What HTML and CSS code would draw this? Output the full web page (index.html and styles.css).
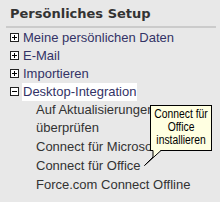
FILE: index.html
```html
<!DOCTYPE html>
<html>
<head>
<meta charset="utf-8">
<link rel="stylesheet" href="styles.css">
</head>
<body>
<div class="panel">
  <div class="header">Persönliches Setup</div>
  <ul class="tree">
    <li class="node"><svg class="tog" width="9" height="9" viewBox="0 0 9 9"><rect x="0.5" y="0.5" width="8" height="8" fill="#fff" stroke="#222"/><path d="M2 4.5H7M4.5 2V7" stroke="#000"/></svg><span>Meine persönlichen Daten</span></li>
    <li class="node"><svg class="tog" width="9" height="9" viewBox="0 0 9 9"><rect x="0.5" y="0.5" width="8" height="8" fill="#fff" stroke="#222"/><path d="M2 4.5H7M4.5 2V7" stroke="#000"/></svg><span>E-Mail</span></li>
    <li class="node"><svg class="tog" width="9" height="9" viewBox="0 0 9 9"><rect x="0.5" y="0.5" width="8" height="8" fill="#fff" stroke="#222"/><path d="M2 4.5H7M4.5 2V7" stroke="#000"/></svg><span>Importieren</span></li>
    <li class="node"><svg class="tog" width="9" height="9" viewBox="0 0 9 9"><rect x="0.5" y="0.5" width="8" height="8" fill="#fff" stroke="#222"/><path d="M2 4.5H7" stroke="#000"/></svg><span class="sel">Desktop-Integration</span></li>
  </ul>
  <ul class="sub">
    <li>Auf Aktualisierungen überprüfen</li>
    <li class="nw">Connect für Microsoft Outlook</li>
    <li>Connect für Office</li>
    <li>Force.com Connect Offline</li>
  </ul>
</div>
<div class="tip"><div class="tip-text">Connect für<br>Office<br>installieren</div></div>
<svg class="tail" width="20" height="20" viewBox="0 0 20 20"><path d="M9 0V7L0.5 15.5L17 0Z" fill="#ffffe1"/><path d="M9 0.5V7L0.5 15.5L17 0.5" fill="none" stroke="#000"/></svg>
</body>
</html>
```
FILE: styles.css
```css
html, body {
  margin: 0;
  padding: 0;
  background: #e8e8e8;
  width: 220px;
  height: 202px;
  overflow: hidden;
}
.panel {
  width: 210px;
  margin-left: 6px;
  overflow: hidden;
  font-family: "Liberation Sans", Arial, sans-serif;
  font-size: 13px;
}
.header {
  font-family: "DejaVu Sans", Verdana, sans-serif;
  font-weight: bold;
  font-size: 13px;
  line-height: 16px;
  color: #333;
  padding: 6px 0 4px 4px;
  border-bottom: 2px solid #cbcbcb;
}
.tree, .sub {
  list-style: none;
  margin: 0;
  padding: 0;
}
.tree {
  padding-top: 1px;
  padding-left: 4px;
}
.node {
  display: flex;
  align-items: flex-start;
  gap: 4px;
  line-height: 18px;
  color: #333366;
}
.tog {
  flex: none;
  margin-top: 4px;
}
.sel {
  background: #fff;
  padding: 0 1px;
  margin-left: -1px;
}
.sub {
  padding-left: 30px;
  padding-right: 6px;
}
.sub li {
  line-height: 18px;
  margin-bottom: 1px;
  color: #333;
}
.sub li.nw {
  white-space: nowrap;
}
.tip {
  position: absolute;
  left: 150px;
  top: 105px;
  width: 60px;
  padding: 2px 0 3px;
  border: 1px solid #000;
  background: #ffffe1;
  color: #000;
  font-family: "Liberation Sans", Arial, sans-serif;
  font-size: 12px;
  line-height: 13px;
  display: flex;
  justify-content: center;
}
.tip-text {
  white-space: nowrap;
  text-align: center;
  transform: scaleX(0.86);
}
.tail {
  position: absolute;
  left: 144px;
  top: 150px;
}
```
